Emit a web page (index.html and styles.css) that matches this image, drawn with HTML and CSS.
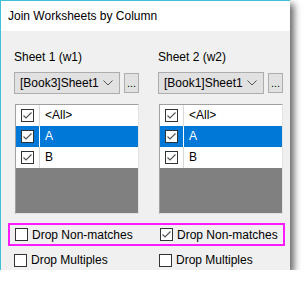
FILE: index.html
```html
<!DOCTYPE html>
<html lang="en">
<head>
    <meta charset="UTF-8">
    <title>Join Worksheets by Column</title>
    <link rel="stylesheet" href="styles.css">
</head>
<body>

<div class="window">
    <div class="titlebar">Join Worksheets by Column</div>

    <div class="content">
        <div class="columns">
            <div class="col">
                <div class="label">Sheet 1 (w1)</div>
                <div class="picker">
                    <div class="combo">
                        <span>[Book3]Sheet1</span>
                        <svg class="chevron" width="10" height="6" viewBox="0 0 10 6"><polyline points="0.5,0.5 5,5 9.5,0.5" fill="none" stroke="#555" stroke-width="1"/></svg>
                    </div>
                    <div class="browse">...</div>
                </div>
                <div class="list">
                    <div class="row">
                        <div class="cell-check"><span class="box checked"></span></div>
                        <div class="cell-text">&lt;All&gt;</div>
                    </div>
                    <div class="row selected">
                        <div class="cell-check"><span class="box checked"></span></div>
                        <div class="cell-text">A</div>
                    </div>
                    <div class="row">
                        <div class="cell-check"><span class="box checked"></span></div>
                        <div class="cell-text">B</div>
                    </div>
                    <div class="empty"></div>
                </div>
            </div>

            <div class="col">
                <div class="label">Sheet 2 (w2)</div>
                <div class="picker">
                    <div class="combo">
                        <span>[Book1]Sheet1</span>
                        <svg class="chevron" width="10" height="6" viewBox="0 0 10 6"><polyline points="0.5,0.5 5,5 9.5,0.5" fill="none" stroke="#555" stroke-width="1"/></svg>
                    </div>
                    <div class="browse">...</div>
                </div>
                <div class="list">
                    <div class="row">
                        <div class="cell-check"><span class="box checked"></span></div>
                        <div class="cell-text">&lt;All&gt;</div>
                    </div>
                    <div class="row selected">
                        <div class="cell-check"><span class="box checked"></span></div>
                        <div class="cell-text">A</div>
                    </div>
                    <div class="row">
                        <div class="cell-check"><span class="box checked"></span></div>
                        <div class="cell-text">B</div>
                    </div>
                    <div class="empty"></div>
                </div>
            </div>
        </div>

        <!-- highlighted option row -->
        <div class="options highlight">
            <div class="opt"><span class="box"></span>Drop Non-matches</div>
            <div class="opt"><span class="box checked"></span>Drop Non-matches</div>
        </div>
        <div class="options">
            <div class="opt"><span class="box"></span>Drop Multiples</div>
            <div class="opt"><span class="box"></span>Drop Multiples</div>
        </div>
    </div>
</div>

</body>
</html>
```

FILE: styles.css
```css
body {
    margin: 0;
    background: #fff;
    font-family: "Liberation Sans", Arial, sans-serif;
    font-size: 12px;
    color: #000;
}
.window {
    width: 289px;
    height: 269px;
    border-top: 1px solid #3fc0d4;
    border-left: 1px solid #3fc0d4;
    background: #f0f0f0;
    box-shadow: 4px 4px 7px rgba(0, 0, 0, 0.6);
}
.titlebar {
    height: 30px;
    line-height: 30px;
    padding-left: 7px;
    background: #fff;
}
.content {
    padding: 19px 7px 0 13px;
}
.columns {
    display: grid;
    grid-template-columns: 125px 125px;
    column-gap: 19px;
}
.label {
    height: 14px;
    line-height: 14px;
}
.picker {
    display: flex;
    gap: 4px;
    margin-top: 8px;
}
.combo {
    flex: 1;
    height: 20px;
    display: flex;
    align-items: center;
    justify-content: space-between;
    padding: 0 6px 0 5px;
    background: #e1e1e1;
    border: 1px solid #adadad;
}
.chevron {
    display: block;
}
.browse {
    width: 13px;
    height: 18px;
    margin-top: 1px;
    border: 1px solid #adadad;
    background: #e1e1e1;
    text-align: center;
    line-height: 18px;
    font-size: 11px;
}
.list {
    margin-top: 10px;
    margin-left: 1px;
    border: 1px solid #a0a0a0;
    border-right-color: #e3e3e3;
    border-bottom-color: #e3e3e3;
    background: #808080;
}
.row {
    display: flex;
    height: 21px;
    background: #fff;
}
.cell-check {
    width: 23px;
    border-right: 1px solid #d8d8d8;
    display: flex;
    align-items: center;
    justify-content: center;
}
.cell-text {
    padding-left: 5px;
    line-height: 21px;
}
.row.selected {
    background: #0078d7;
    color: #fff;
}
.row.selected .cell-check {
    border-right-color: #fff;
}
.empty {
    height: 45px;
}
.box {
    width: 11px;
    height: 11px;
    border: 1px solid #333;
    background: #fff;
    display: inline-block;
    flex-shrink: 0;
}
.box.checked {
    background: #fff url("data:image/svg+xml,%3Csvg xmlns='http://www.w3.org/2000/svg' width='11' height='11'%3E%3Cpolyline points='1.5,5.5 4,8 9.5,2.5' fill='none' stroke='%23555' stroke-width='1.2'/%3E%3C/svg%3E") no-repeat center;
}
.options {
    display: grid;
    grid-template-columns: 125px 125px;
    column-gap: 20px;
    align-items: center;
}
.options.highlight {
    margin: 9px -2px 0 -6px;
    height: 19px;
    padding: 0 0 0 5px;
    border: 2px solid #ff1aff;
    column-gap: 20px;
}
.options + .options {
    margin-top: 7px;
    height: 12px;
}
.opt {
    display: flex;
    align-items: center;
    gap: 4px;
    white-space: nowrap;
}
```
